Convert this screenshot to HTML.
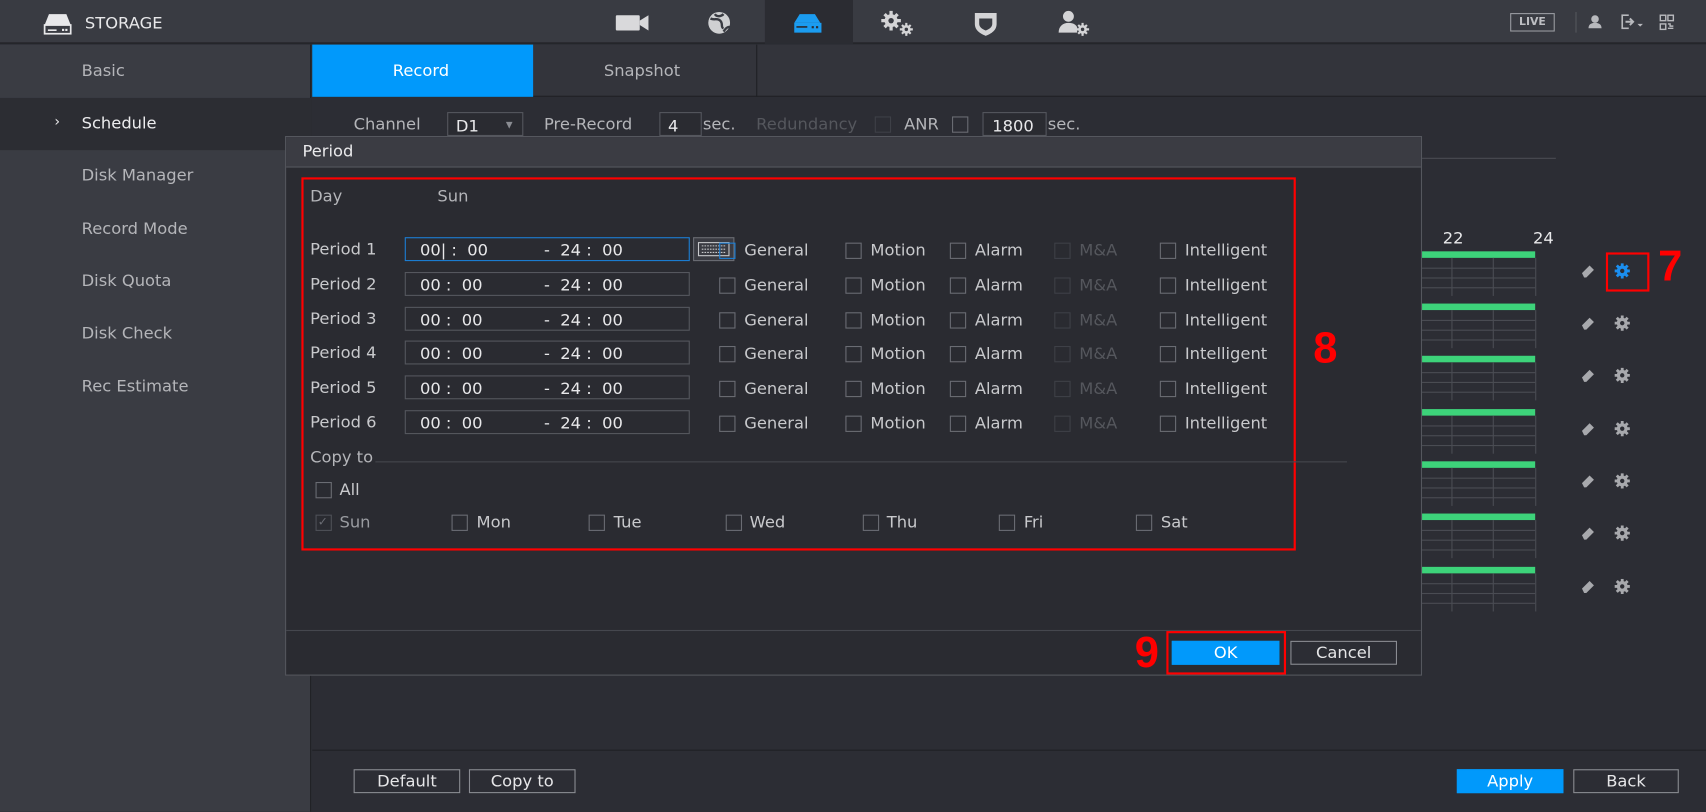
<!DOCTYPE html>
<html><head><meta charset="utf-8"><style>
*{box-sizing:border-box;margin:0;padding:0}
html,body{width:1706px;height:812px;overflow:hidden;background:#2c2d34}
#w{position:absolute;left:0;top:0;width:1568px;height:746px;transform:scale(1.08801);transform-origin:0 0;background:#2c2d34;font-family:"DejaVu Sans","Liberation Sans",sans-serif;font-size:15px;color:#c8c9cc}
.a{position:absolute}
.t{position:absolute;white-space:nowrap;line-height:1;margin-top:1px}
.cb{position:absolute;width:15px;height:15px;border:1px solid #6a6c73}
.cbd{border-color:#3e4047}
.in{position:absolute;height:22px;border:1px solid #55575e;background:#2a2b31}
.btn{position:absolute;height:22px;border:1px solid #8a8c92;background:#2c2d34;color:#e6e6e8;text-align:center;line-height:21px}
.red{position:absolute;border:2px solid #ff0000}
.num{position:absolute;color:#ff0000;font-family:"Liberation Sans",sans-serif;font-weight:bold;font-size:40px;line-height:1}
.grid{position:absolute;left:1306px;width:106px;height:35px;border-right:1px solid #4a4c53;background:
linear-gradient(#4a4c53,#4a4c53) 0 9px/100% 1px no-repeat,linear-gradient(#4a4c53,#4a4c53) 0 18px/100% 1px no-repeat,linear-gradient(#4a4c53,#4a4c53) 0 27px/100% 1px no-repeat,linear-gradient(#4a4c53,#4a4c53) 28px 0/1px 100% no-repeat,linear-gradient(#4a4c53,#4a4c53) 66px 0/1px 100% no-repeat}
.gb{position:absolute;left:1306px;width:105px;height:6px;background:#3dd37a}
</style></head><body><div id="w">
<div class="a" style="left:0;top:0;width:1568px;height:40px;background:#393b42;border-bottom:1px solid #1e1f23"></div>
<svg class="a" style="left:40px;top:12px" width="26" height="20"><path d="M5 1h16l4 10H1z" fill="#e8e8ea"/><rect x="1" y="11" width="24" height="8" fill="none" stroke="#e8e8ea" stroke-width="1.6"/><rect x="4" y="15" width="8" height="1.5" fill="#e8e8ea"/><rect x="17" y="14.5" width="2" height="2" fill="#e8e8ea"/><rect x="20" y="14.5" width="2" height="2" fill="#e8e8ea"/></svg>
<div class="t" style="left:78px;top:13px;color:#e8e8ea;font-size:15px">STORAGE</div>
<div class="a" style="left:703px;top:0;width:81px;height:40px;background:#2b2c32"></div>
<svg class="a" style="left:565px;top:13px" width="32" height="16"><rect x="1" y="1" width="22" height="14" rx="1" fill="#d9d9db"/><path d="M23 6l8-5v14l-8-5z" fill="#d9d9db"/></svg>
<svg class="a" style="left:648px;top:9px" width="28" height="24"><circle cx="13" cy="12" r="10" fill="#cfd0d2"/><path d="M5 8c4 2 6-1 9 2s0 6 3 7M9 4c2 3 6 2 8 0M17 20c2-3 4-5 6-4" stroke="#393b42" stroke-width="2.2" fill="none"/></svg>
<svg class="a" style="left:729px;top:12px" width="28" height="20"><path d="M6 1h14l5 8H1z" fill="#1b9cf0"/><rect x="1" y="9" width="25" height="9" fill="#1b9cf0"/><rect x="3" y="12" width="10" height="1.5" fill="#2b2c32"/><rect x="17" y="12" width="2" height="2" fill="#2b2c32"/><rect x="21" y="12" width="2" height="2" fill="#2b2c32"/></svg>
<svg class="a" style="left:808px;top:9px" width="34" height="26" fill="#d4d4d6"><circle cx="11" cy="10" r="6"/><g stroke="#d4d4d6" stroke-width="3"><path d="M11 1v18M2 10h18M5 4l12 12M17 4L5 16"/></g><circle cx="11" cy="10" r="2.5" fill="#393b42"/><circle cx="25" cy="18" r="4"/><g stroke="#d4d4d6" stroke-width="2"><path d="M25 12v12M19 18h12M21 14l8 8M29 14l-8 8"/></g><circle cx="25" cy="18" r="1.6" fill="#393b42"/></svg>
<svg class="a" style="left:894px;top:10px" width="24" height="24"><path d="M2 2h20v10c0 6-5 9-10 11C7 21 2 18 2 12z" fill="#d4d4d6"/><path d="M6 7h12v5c0 3-3 5-6 6-3-1-6-3-6-6z" fill="#393b42"/></svg>
<svg class="a" style="left:972px;top:9px" width="32" height="26" fill="#d4d4d6"><circle cx="10" cy="6" r="5"/><path d="M1 21c0-6 4-9 9-9s7 2 8 4v5z"/><circle cx="23" cy="18" r="4"/><g stroke="#d4d4d6" stroke-width="2"><path d="M23 12v12M17 18h12M19 14l8 8M27 14l-8 8"/></g><circle cx="23" cy="18" r="1.6" fill="#393b42"/></svg>
<div class="a" style="left:1388px;top:12px;width:41px;height:17px;border:1px solid #9a9ca1;color:#bdbec2;font-size:10px;text-align:center;line-height:15px;font-weight:bold">LIVE</div>
<div class="a" style="left:1448px;top:11px;width:1px;height:19px;background:#55575d"></div>
<svg class="a" style="left:1459px;top:13px" width="14" height="14" fill="#b8b9bd"><circle cx="7" cy="4.5" r="3.5"/><path d="M1 13c0-4 3-5 6-5s6 1 6 5z"/></svg>
<svg class="a" style="left:1489px;top:13px" width="24" height="14"><path d="M8 1H2v12h6" stroke="#b8b9bd" fill="none" stroke-width="1.5"/><path d="M5 7h6M9 4l3 3-3 3" stroke="#b8b9bd" fill="none" stroke-width="1.8"/><path d="M16 9h5l-2.5 2.5z" fill="#b8b9bd"/></svg>
<svg class="a" style="left:1525px;top:13px" width="14" height="15" fill="none" stroke="#b8b9bd" stroke-width="1.3"><rect x="1" y="1" width="5" height="5"/><rect x="8" y="1" width="5" height="5"/><rect x="1" y="9" width="5" height="5"/><path d="M8 9h2v2h3M8 13h5"/></svg>
<div class="a" style="left:0;top:41px;width:286px;height:705px;background:#3a3c43;border-right:1px solid #1f2024"></div>
<div class="a" style="left:0;top:90px;width:286px;height:48px;background:#2c2d33"></div>
<div class="t" style="left:75px;top:57px;color:#b4b5b9">Basic</div>
<div class="t" style="left:50px;top:105px;color:#e8e8ea;font-size:13px">›</div>
<div class="t" style="left:75px;top:105px;color:#ececee">Schedule</div>
<div class="t" style="left:75px;top:153px;color:#b4b5b9">Disk Manager</div>
<div class="t" style="left:75px;top:202px;color:#b4b5b9">Record Mode</div>
<div class="t" style="left:75px;top:250px;color:#b4b5b9">Disk Quota</div>
<div class="t" style="left:75px;top:298px;color:#b4b5b9">Disk Check</div>
<div class="t" style="left:75px;top:347px;color:#b4b5b9">Rec Estimate</div>
<div class="a" style="left:287px;top:41px;width:1281px;height:48px;background:#33343b;border-bottom:1px solid #1f2024"></div>
<div class="a" style="left:287px;top:41px;width:203px;height:48px;background:#0199fb"></div>
<div class="t" style="left:361px;top:57px;color:#fff">Record</div>
<div class="a" style="left:695px;top:41px;width:1px;height:48px;background:#1f2024"></div>
<div class="t" style="left:555px;top:57px;color:#b4b5b9">Snapshot</div>
<div class="t" style="left:325px;top:106px;color:#b4b5b9">Channel</div>
<div class="in" style="left:411px;top:103px;width:70px;color:#e8e8ea;padding:3px 7px">D1</div>
<div class="t" style="left:465px;top:110px;color:#8a8c92;font-size:8px">▼</div>
<div class="t" style="left:500px;top:106px;color:#b4b5b9">Pre-Record</div>
<div class="in" style="left:606px;top:103px;width:39px;color:#e8e8ea;padding:3px 7px">4</div>
<div class="t" style="left:646px;top:106px;color:#b4b5b9">sec.</div>
<div class="t" style="left:695px;top:106px;color:#55575d">Redundancy</div>
<div class="cb cbd" style="left:804px;top:107px"></div>
<div class="t" style="left:831px;top:106px;color:#b4b5b9">ANR</div>
<div class="cb" style="left:875px;top:107px"></div>
<div class="in" style="left:903px;top:103px;width:59px;color:#e8e8ea;padding:3px 8px">1800</div>
<div class="t" style="left:963px;top:106px;color:#b4b5b9">sec.</div>
<div class="a" style="left:1306px;top:145px;width:124px;height:1px;background:#4a4c53"></div>
<div class="t" style="left:1326px;top:211px;color:#e8e8ea">22</div>
<div class="t" style="left:1409px;top:211px;color:#e8e8ea">24</div>
<div class="gb" style="top:231px"></div><div class="grid" style="top:237px"></div>
<div class="gb" style="top:279px"></div><div class="grid" style="top:285px"></div>
<div class="gb" style="top:327px"></div><div class="grid" style="top:333px"></div>
<div class="gb" style="top:376px"></div><div class="grid" style="top:382px"></div>
<div class="gb" style="top:424px"></div><div class="grid" style="top:430px"></div>
<div class="gb" style="top:472px"></div><div class="grid" style="top:478px"></div>
<div class="gb" style="top:521px"></div><div class="grid" style="top:527px"></div>
<svg width="0" height="0" style="position:absolute"><defs>
<g id="er"><path d="M1 8l7-7 4 4-7 7H3z" fill="#a8a9ad"/></g>
<g id="gr"><circle cx="7" cy="7" r="4.5"/><g stroke-width="2.6"><path d="M7 0v14M0 7h14M2 2l10 10M12 2L2 12"/></g><circle cx="7" cy="7" r="2" fill="#2c2d34" stroke="none"/></g>
</defs></svg>
<svg class="a" style="left:1453px;top:243px" width="14" height="14"><use href="#er"/></svg>
<svg class="a" style="left:1484px;top:242px" width="15" height="15" fill="#1b8ff0" stroke="#1b8ff0"><use href="#gr"/></svg>
<svg class="a" style="left:1453px;top:291px" width="14" height="14"><use href="#er"/></svg>
<svg class="a" style="left:1484px;top:290px" width="15" height="15" fill="#a8a9ad" stroke="#a8a9ad"><use href="#gr"/></svg>
<svg class="a" style="left:1453px;top:339px" width="14" height="14"><use href="#er"/></svg>
<svg class="a" style="left:1484px;top:338px" width="15" height="15" fill="#a8a9ad" stroke="#a8a9ad"><use href="#gr"/></svg>
<svg class="a" style="left:1453px;top:388px" width="14" height="14"><use href="#er"/></svg>
<svg class="a" style="left:1484px;top:387px" width="15" height="15" fill="#a8a9ad" stroke="#a8a9ad"><use href="#gr"/></svg>
<svg class="a" style="left:1453px;top:436px" width="14" height="14"><use href="#er"/></svg>
<svg class="a" style="left:1484px;top:435px" width="15" height="15" fill="#a8a9ad" stroke="#a8a9ad"><use href="#gr"/></svg>
<svg class="a" style="left:1453px;top:484px" width="14" height="14"><use href="#er"/></svg>
<svg class="a" style="left:1484px;top:483px" width="15" height="15" fill="#a8a9ad" stroke="#a8a9ad"><use href="#gr"/></svg>
<svg class="a" style="left:1453px;top:533px" width="14" height="14"><use href="#er"/></svg>
<svg class="a" style="left:1484px;top:532px" width="15" height="15" fill="#a8a9ad" stroke="#a8a9ad"><use href="#gr"/></svg>
<div class="red" style="left:1476px;top:232px;width:40px;height:36px"></div>
<div class="num" style="left:1524px;top:225px">7</div>
<div class="a" style="left:287px;top:689px;width:1281px;height:1px;background:#1f2024"></div>
<div class="btn" style="left:325px;top:707px;width:98px">Default</div>
<div class="btn" style="left:431px;top:707px;width:98px">Copy to</div>
<div class="btn" style="left:1339px;top:707px;width:98px;background:#0199fb;border-color:#0199fb;color:#fff">Apply</div>
<div class="btn" style="left:1446px;top:707px;width:97px">Back</div>
<div class="a" style="left:262px;top:125px;width:1045px;height:496px;background:#2a2b31;border:1px solid #55575e"></div>
<div class="a" style="left:263px;top:126px;width:1043px;height:28px;background:#3b3c43;border-bottom:1px solid #55575e"></div>
<div class="t" style="left:278px;top:131px;color:#eaeaec">Period</div>
<div class="a" style="left:263px;top:579px;width:1043px;height:1px;background:#45474e"></div>
<div class="red" style="left:277px;top:163px;width:914px;height:343px"></div>
<div class="num" style="left:1207px;top:300px">8</div>
<div class="t" style="left:285px;top:172px;color:#b4b5b9">Day</div>
<div class="t" style="left:402px;top:172px;color:#b4b5b9">Sun</div>
<div class="a" style="left:637px;top:218px;width:38px;height:22px;border:1px solid #6a6c73;background:#3a3b42"></div>
<svg class="a" style="left:641px;top:222px" width="30" height="14" fill="none" stroke="#c8c9cc"><rect x="1" y="1" width="28" height="12"/><path d="M4 4h22M4 7h22M4 10h22" stroke-dasharray="1.5 1"/></svg>
<div class="t" style="left:285px;top:412px;color:#b4b5b9">Copy to</div>
<div class="a" style="left:345px;top:424px;width:893px;height:1px;background:#45474e"></div>
<div class="cb" style="left:290px;top:443px"></div><div class="t" style="left:312px;top:442px">All</div>
<div class="cb" style="left:290px;top:473px;border-color:#4e5057"></div><div class="t" style="left:292px;top:473px;color:#6a6c73;font-size:11px">✓</div><div class="t" style="left:312px;top:472px;color:#9a9ca1">Sun</div>
<div class="cb" style="left:415px;top:473px"></div><div class="t" style="left:438px;top:472px">Mon</div>
<div class="cb" style="left:541px;top:473px"></div><div class="t" style="left:564px;top:472px">Tue</div>
<div class="cb" style="left:667px;top:473px"></div><div class="t" style="left:689px;top:472px">Wed</div>
<div class="cb" style="left:793px;top:473px"></div><div class="t" style="left:815px;top:472px">Thu</div>
<div class="cb" style="left:918px;top:473px"></div><div class="t" style="left:941px;top:472px">Fri</div>
<div class="cb" style="left:1044px;top:473px"></div><div class="t" style="left:1067px;top:472px">Sat</div>
<div class="btn" style="left:1077px;top:589px;width:99px;background:#0199fb;border-color:#0199fb;color:#fff">OK</div>
<div class="btn" style="left:1186px;top:589px;width:98px">Cancel</div>
<div class="red" style="left:1072px;top:580px;width:110px;height:40px"></div>
<div class="num" style="left:1043px;top:580px">9</div>

<div class="t" style="left:285px;top:221px">Period 1</div><div class="in" style="left:372px;top:218px;width:262px;border-color:#1b7fd6"></div>
<div class="t" style="left:386px;top:222px;color:#e8e8ea">00|&nbsp;:&nbsp;&nbsp;00</div><div class="t" style="left:500px;top:222px;color:#e8e8ea">-&nbsp;&nbsp;24&nbsp;:&nbsp;&nbsp;00</div>
<div class="cb" style="left:661px;top:223px;border-color:#1b7fd6"></div><div class="t" style="left:684px;top:222px">General</div>
<div class="cb" style="left:777px;top:223px"></div><div class="t" style="left:800px;top:222px">Motion</div>
<div class="cb" style="left:873px;top:223px"></div><div class="t" style="left:896px;top:222px">Alarm</div>
<div class="cb cbd" style="left:969px;top:223px"></div><div class="t" style="left:992px;top:222px;color:#55575d">M&amp;A</div>
<div class="cb" style="left:1066px;top:223px"></div><div class="t" style="left:1089px;top:222px">Intelligent</div>

<div class="t" style="left:285px;top:253px">Period 2</div><div class="in" style="left:372px;top:250px;width:262px"></div>
<div class="t" style="left:386px;top:254px;color:#e8e8ea">00&nbsp;:&nbsp;&nbsp;00</div><div class="t" style="left:500px;top:254px;color:#e8e8ea">-&nbsp;&nbsp;24&nbsp;:&nbsp;&nbsp;00</div>
<div class="cb" style="left:661px;top:255px"></div><div class="t" style="left:684px;top:254px">General</div>
<div class="cb" style="left:777px;top:255px"></div><div class="t" style="left:800px;top:254px">Motion</div>
<div class="cb" style="left:873px;top:255px"></div><div class="t" style="left:896px;top:254px">Alarm</div>
<div class="cb cbd" style="left:969px;top:255px"></div><div class="t" style="left:992px;top:254px;color:#55575d">M&amp;A</div>
<div class="cb" style="left:1066px;top:255px"></div><div class="t" style="left:1089px;top:254px">Intelligent</div>

<div class="t" style="left:285px;top:285px">Period 3</div><div class="in" style="left:372px;top:282px;width:262px"></div>
<div class="t" style="left:386px;top:286px;color:#e8e8ea">00&nbsp;:&nbsp;&nbsp;00</div><div class="t" style="left:500px;top:286px;color:#e8e8ea">-&nbsp;&nbsp;24&nbsp;:&nbsp;&nbsp;00</div>
<div class="cb" style="left:661px;top:287px"></div><div class="t" style="left:684px;top:286px">General</div>
<div class="cb" style="left:777px;top:287px"></div><div class="t" style="left:800px;top:286px">Motion</div>
<div class="cb" style="left:873px;top:287px"></div><div class="t" style="left:896px;top:286px">Alarm</div>
<div class="cb cbd" style="left:969px;top:287px"></div><div class="t" style="left:992px;top:286px;color:#55575d">M&amp;A</div>
<div class="cb" style="left:1066px;top:287px"></div><div class="t" style="left:1089px;top:286px">Intelligent</div>

<div class="t" style="left:285px;top:316px">Period 4</div><div class="in" style="left:372px;top:313px;width:262px"></div>
<div class="t" style="left:386px;top:317px;color:#e8e8ea">00&nbsp;:&nbsp;&nbsp;00</div><div class="t" style="left:500px;top:317px;color:#e8e8ea">-&nbsp;&nbsp;24&nbsp;:&nbsp;&nbsp;00</div>
<div class="cb" style="left:661px;top:318px"></div><div class="t" style="left:684px;top:317px">General</div>
<div class="cb" style="left:777px;top:318px"></div><div class="t" style="left:800px;top:317px">Motion</div>
<div class="cb" style="left:873px;top:318px"></div><div class="t" style="left:896px;top:317px">Alarm</div>
<div class="cb cbd" style="left:969px;top:318px"></div><div class="t" style="left:992px;top:317px;color:#55575d">M&amp;A</div>
<div class="cb" style="left:1066px;top:318px"></div><div class="t" style="left:1089px;top:317px">Intelligent</div>

<div class="t" style="left:285px;top:348px">Period 5</div><div class="in" style="left:372px;top:345px;width:262px"></div>
<div class="t" style="left:386px;top:349px;color:#e8e8ea">00&nbsp;:&nbsp;&nbsp;00</div><div class="t" style="left:500px;top:349px;color:#e8e8ea">-&nbsp;&nbsp;24&nbsp;:&nbsp;&nbsp;00</div>
<div class="cb" style="left:661px;top:350px"></div><div class="t" style="left:684px;top:349px">General</div>
<div class="cb" style="left:777px;top:350px"></div><div class="t" style="left:800px;top:349px">Motion</div>
<div class="cb" style="left:873px;top:350px"></div><div class="t" style="left:896px;top:349px">Alarm</div>
<div class="cb cbd" style="left:969px;top:350px"></div><div class="t" style="left:992px;top:349px;color:#55575d">M&amp;A</div>
<div class="cb" style="left:1066px;top:350px"></div><div class="t" style="left:1089px;top:349px">Intelligent</div>

<div class="t" style="left:285px;top:380px">Period 6</div><div class="in" style="left:372px;top:377px;width:262px"></div>
<div class="t" style="left:386px;top:381px;color:#e8e8ea">00&nbsp;:&nbsp;&nbsp;00</div><div class="t" style="left:500px;top:381px;color:#e8e8ea">-&nbsp;&nbsp;24&nbsp;:&nbsp;&nbsp;00</div>
<div class="cb" style="left:661px;top:382px"></div><div class="t" style="left:684px;top:381px">General</div>
<div class="cb" style="left:777px;top:382px"></div><div class="t" style="left:800px;top:381px">Motion</div>
<div class="cb" style="left:873px;top:382px"></div><div class="t" style="left:896px;top:381px">Alarm</div>
<div class="cb cbd" style="left:969px;top:382px"></div><div class="t" style="left:992px;top:381px;color:#55575d">M&amp;A</div>
<div class="cb" style="left:1066px;top:382px"></div><div class="t" style="left:1089px;top:381px">Intelligent</div>
</div></body></html>
